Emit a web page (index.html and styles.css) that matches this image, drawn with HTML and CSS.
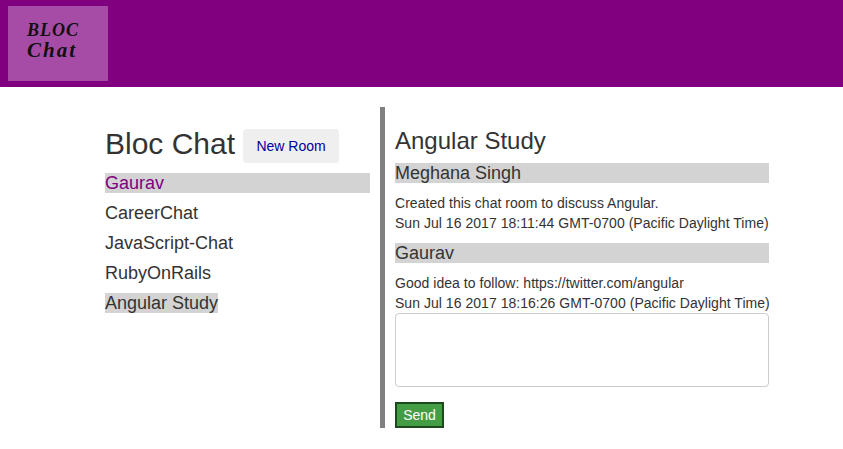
FILE: index.html
```html
<!DOCTYPE html>
<html lang="en">
<head>
<meta charset="utf-8">
<title>Bloc Chat</title>
<link rel="stylesheet" href="styles.css">
</head>
<body>
<header class="topbar">
  <div class="logo"><span class="logo-top">BLOC</span><span class="logo-bottom">Chat</span></div>
</header>
<main class="layout">
  <section class="rooms">
    <div class="rooms-head">
      <h1>Bloc Chat</h1>
      <button class="new-room" type="button">New Room</button>
    </div>
    <ul class="room-list">
      <li class="room room-first"><a>Gaurav</a></li>
      <li class="room"><a>CareerChat</a></li>
      <li class="room"><a>JavaScript-Chat</a></li>
      <li class="room"><a>RubyOnRails</a></li>
      <li class="room"><a class="room-active">Angular Study</a></li>
    </ul>
  </section>
  <section class="chat">
    <h2>Angular Study</h2>
    <article class="message">
      <h3>Meghana Singh</h3>
      <p>Created this chat room to discuss Angular.</p>
      <p>Sun Jul 16 2017 18:11:44 GMT-0700 (Pacific Daylight Time)</p>
    </article>
    <article class="message">
      <h3>Gaurav</h3>
      <p>Good idea to follow: https://twitter.com/angular</p>
      <p>Sun Jul 16 2017 18:16:26 GMT-0700 (Pacific Daylight Time)</p>
    </article>
    <form class="composer">
      <textarea aria-label="Message"></textarea>
      <button class="send" type="button">Send</button>
    </form>
  </section>
</main>
</body>
</html>
```
FILE: styles.css
```css
* { box-sizing: border-box; }
html, body { margin: 0; padding: 0; }
body {
  font-family: "Liberation Sans", Arial, sans-serif;
  font-size: 14px;
  line-height: 20px;
  color: #333;
  background: #fff;
}
.topbar {
  height: 87px;
  background: #800080;
  padding: 6px 8px;
}
.logo {
  width: 100px;
  height: 75px;
  background: #a64ca6;
  color: #111;
  font-family: "Liberation Serif", serif;
  font-style: italic;
  font-weight: bold;
  line-height: 20px;
  padding: 14px 0 0 19px;
  display: flex;
  flex-direction: column;
  align-items: flex-start;
}
.logo-top { font-size: 18px; letter-spacing: 1px; }
.logo-bottom { font-size: 21px; letter-spacing: 2px; }
.layout {
  display: flex;
  padding: 20px 0 0 105px;
}
.rooms {
  width: 265px;
  margin-right: 10px;
}
.rooms-head {
  display: flex;
  align-items: flex-start;
  height: 46px;
  margin: 22px 0 0;
}
.rooms-head h1 {
  margin: -3px 8px 0 0;
  font-size: 30px;
  font-weight: 500;
  line-height: 36px;
}
.new-room {
  width: 96px;
  height: 34px;
  border: 0;
  border-radius: 4px;
  background: #efefef;
  color: #0000a0;
  font: 14px/20px "Liberation Sans", Arial, sans-serif;
  padding: 0;
}
.room-list {
  list-style: none;
  margin: 0;
  padding: 0;
}
.room {
  font-size: 18px;
  line-height: 20px;
  margin-top: 10px;
}
.room-first {
  background: #d3d3d3;
  color: #800080;
  margin-top: -2px;
}
.room-active { background: #d3d3d3; display: inline-block; }
.chat {
  width: 389px;
  height: 321px;
  border-left: 5px solid #808080;
  padding: 17px 0 0 10px;
}
.chat h2 {
  margin: 0 0 5px;
  font-size: 24px;
  font-weight: 500;
  line-height: 34px;
}
.message h3 {
  margin: 0 0 10px;
  background: #d3d3d3;
  font-size: 18px;
  font-weight: 500;
  line-height: 21px;
  height: 20px;
}
.message p { margin: 0; letter-spacing: 0.035px; white-space: nowrap; }
.message + .message { margin-top: 10px; }
.composer { display: block; }
.composer textarea {
  display: block;
  width: 374px;
  height: 74px;
  margin: 0 0 15px;
  border: 1px solid #ccc;
  border-radius: 4px;
  resize: none;
  background: #fff;
}
.send {
  display: block;
  width: 49px;
  height: 26px;
  border: 2px solid #1c4a1c;
  background: #449d44;
  color: #fff;
  font: 14px/20px "Liberation Sans", Arial, sans-serif;
  padding: 0;
}
```
